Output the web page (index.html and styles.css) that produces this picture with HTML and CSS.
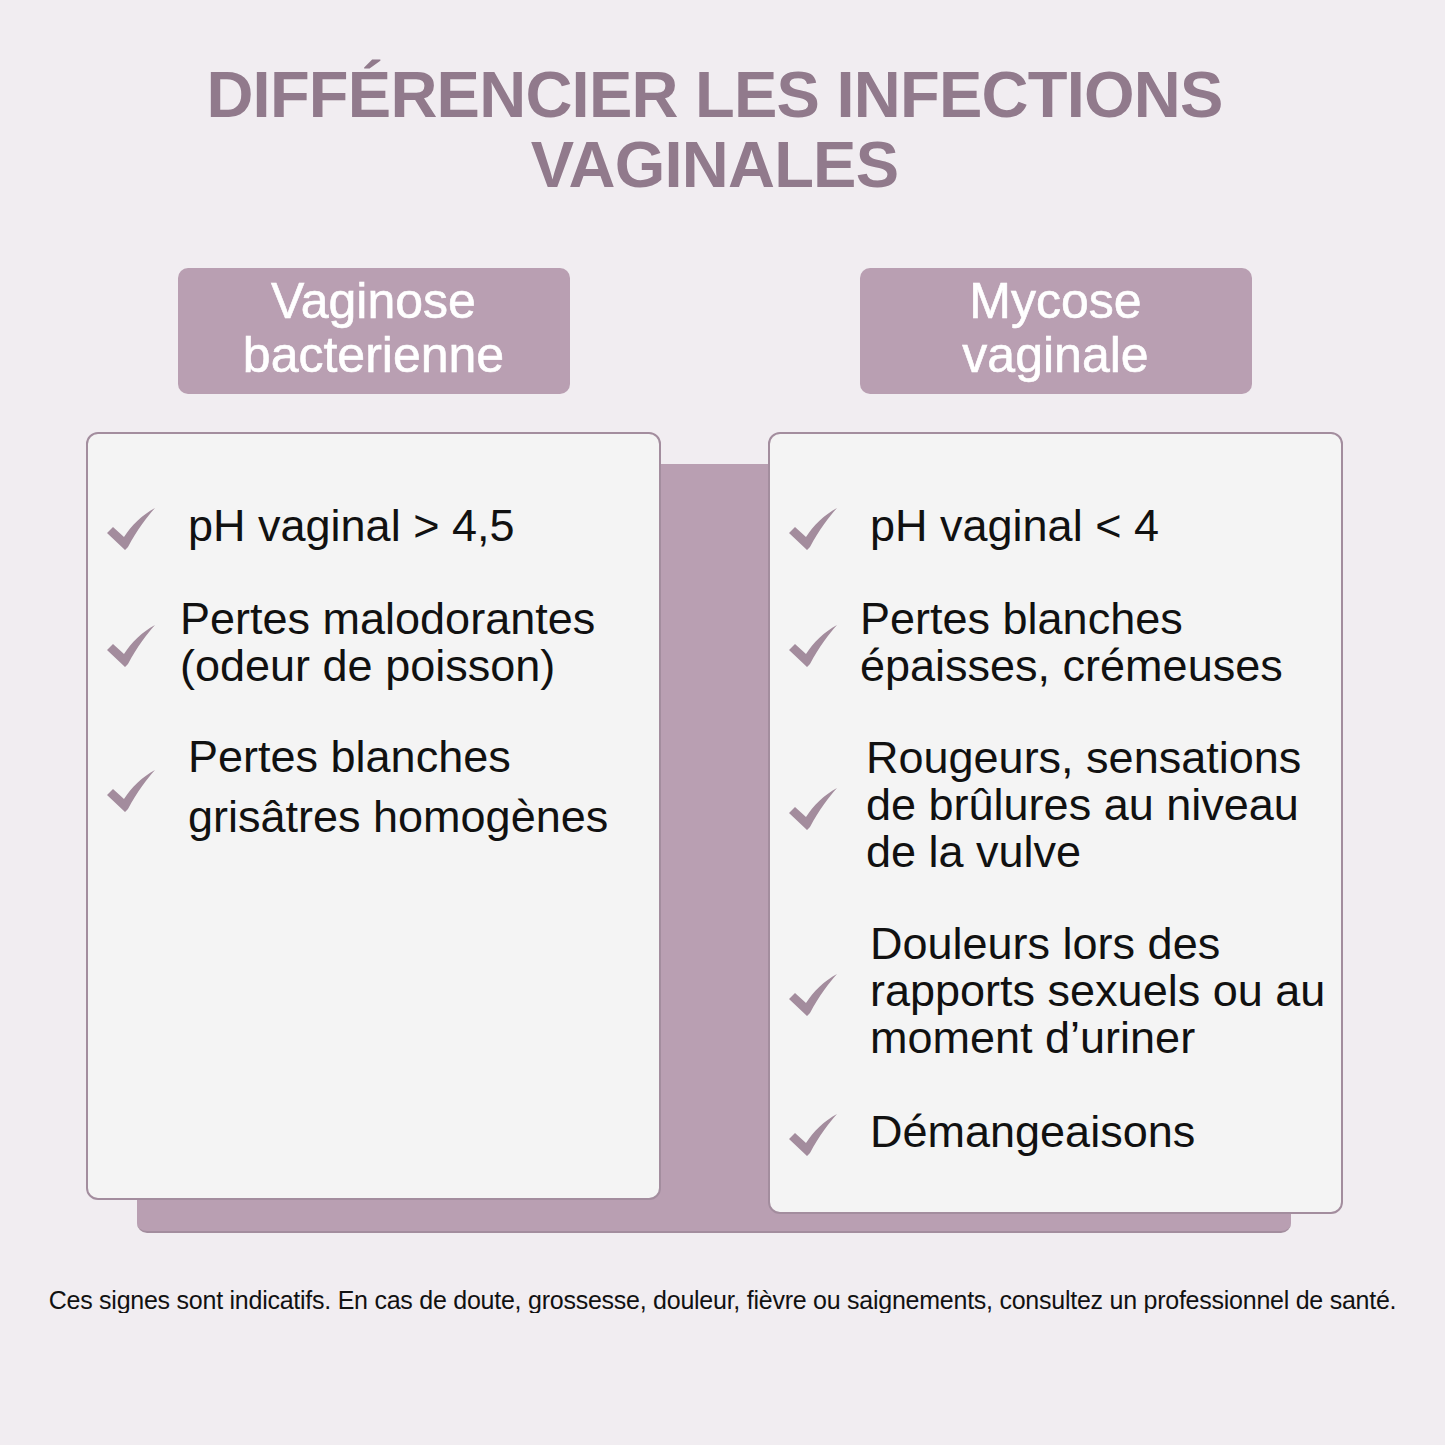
FILE: index.html
```html
<!DOCTYPE html>
<html lang="fr">
<head>
<meta charset="utf-8">
<title>Différencier les infections vaginales</title>
<link rel="stylesheet" href="styles.css">
</head>
<body>
<main class="page">
  <div class="head">
    <h1 class="title">DIFFÉRENCIER LES INFECTIONS<br>VAGINALES</h1>
  </div>

  <section class="compare">
    <div class="col">
      <div class="label">Vaginose<br>bacterienne</div>
      <div class="card card-left">
        <div class="item">
          <svg class="check" viewBox="0 0 50 44"><path d="M1 27 L7 21 L18 31 C25 20 36 9 49 2 C41 11 31 24 22 41 L19 44 Z"/></svg>
          <p class="text">pH vaginal &gt; 4,5</p>
        </div>
        <div class="item">
          <svg class="check" viewBox="0 0 50 44"><path d="M1 27 L7 21 L18 31 C25 20 36 9 49 2 C41 11 31 24 22 41 L19 44 Z"/></svg>
          <p class="text nudge-m">Pertes malodorantes<br>(odeur de poisson)</p>
        </div>
        <div class="item item-tall">
          <svg class="check" viewBox="0 0 50 44"><path d="M1 27 L7 21 L18 31 C25 20 36 9 49 2 C41 11 31 24 22 41 L19 44 Z"/></svg>
          <p class="text text-tall">Pertes blanches<br>grisâtres homogènes</p>
        </div>
      </div>
    </div>

    <div class="col">
      <div class="label">Mycose<br>vaginale</div>
      <div class="card card-right">
        <div class="item">
          <svg class="check" viewBox="0 0 50 44"><path d="M1 27 L7 21 L18 31 C25 20 36 9 49 2 C41 11 31 24 22 41 L19 44 Z"/></svg>
          <p class="text">pH vaginal &lt; 4</p>
        </div>
        <div class="item">
          <svg class="check" viewBox="0 0 50 44"><path d="M1 27 L7 21 L18 31 C25 20 36 9 49 2 C41 11 31 24 22 41 L19 44 Z"/></svg>
          <p class="text nudge-l">Pertes blanches<br>épaisses, crémeuses</p>
        </div>
        <div class="item">
          <svg class="check" viewBox="0 0 50 44"><path d="M1 27 L7 21 L18 31 C25 20 36 9 49 2 C41 11 31 24 22 41 L19 44 Z"/></svg>
          <p class="text nudge-s">Rougeurs, sensations<br>de brûlures au niveau<br>de la vulve</p>
        </div>
        <div class="item">
          <svg class="check" viewBox="0 0 50 44"><path d="M1 27 L7 21 L18 31 C25 20 36 9 49 2 C41 11 31 24 22 41 L19 44 Z"/></svg>
          <p class="text">Douleurs lors des<br>rapports sexuels ou au<br>moment d’uriner</p>
        </div>
        <div class="item">
          <svg class="check" viewBox="0 0 50 44"><path d="M1 27 L7 21 L18 31 C25 20 36 9 49 2 C41 11 31 24 22 41 L19 44 Z"/></svg>
          <p class="text">Démangeaisons</p>
        </div>
      </div>
    </div>
  </section>

  <p class="footnote">Ces signes sont indicatifs. En cas de doute, grossesse, douleur, fièvre ou saignements, consultez un professionnel de santé.</p>
</main>
</body>
</html>
```

FILE: styles.css
```css
html, body {
  margin: 0;
  padding: 0;
}

body {
  background: #f1edf1;
  font-family: "Liberation Sans", Arial, sans-serif;
  color: #111111;
}

.page {
  padding-top: 60px;
}

.head {
  width: 1257px;
  margin-left: 86px;
}

.title {
  margin: 0;
  font-size: 65px;
  line-height: 70px;
  font-weight: 700;
  letter-spacing: -0.75px;
  color: #917a8c;
  text-align: center;
}

.compare {
  position: relative;
  display: flex;
  gap: 107px;
  width: 1257px;
  margin: 68px 0 0 86px;
}

.compare::before {
  content: "";
  position: absolute;
  left: 51px;
  right: 52px;
  top: 196px;
  bottom: -19px;
  background: #b99fb2;
  border-bottom: 2px solid #a38d9e;
  border-radius: 0 0 10px 10px;
  z-index: 0;
}

.col {
  position: relative;
  z-index: 1;
  width: 575px;
  display: flex;
  flex-direction: column;
  align-items: center;
}

.label {
  width: 392px;
  height: 126px;
  box-sizing: border-box;
  padding-bottom: 6px;
  border-radius: 10px;
  background: #b99fb2;
  color: #ffffff;
  font-size: 50px;
  line-height: 54px;
  text-align: center;
  display: flex;
  align-items: center;
  justify-content: center;
  -webkit-text-stroke: 0.6px #ffffff;
}

.card {
  align-self: stretch;
  box-sizing: border-box;
  margin-top: 38px;
  border: 2px solid #a38d9e;
  border-radius: 12px;
  background: #f4f4f4;
  padding: 66px 18px 0 18px;
}

.card-left {
  height: 768px;
}

.card-right {
  height: 782px;
}

.item {
  display: flex;
  align-items: center;
  margin-top: 45px;
}

.item:first-child {
  margin-top: 0;
}

.item-tall {
  margin-top: 38px;
}

.check {
  flex: none;
  width: 50px;
  height: 44px;
  margin-right: 32px;
  margin-top: 6px;
  fill: #a38c9d;
}

.text {
  margin: 0;
  font-size: 45px;
  line-height: 47px;
  white-space: nowrap;
  color: #111111;
}

.text-tall {
  line-height: 60px;
}

.nudge-s {
  margin-left: -4px;
}

.nudge-m {
  margin-left: -8px;
}

.nudge-l {
  margin-left: -10px;
}

.footnote {
  margin: 73px 0 0 0;
  font-size: 25px;
  line-height: 26px;
  text-align: center;
  white-space: nowrap;
  letter-spacing: -0.25px;
  color: #111111;
}
```
